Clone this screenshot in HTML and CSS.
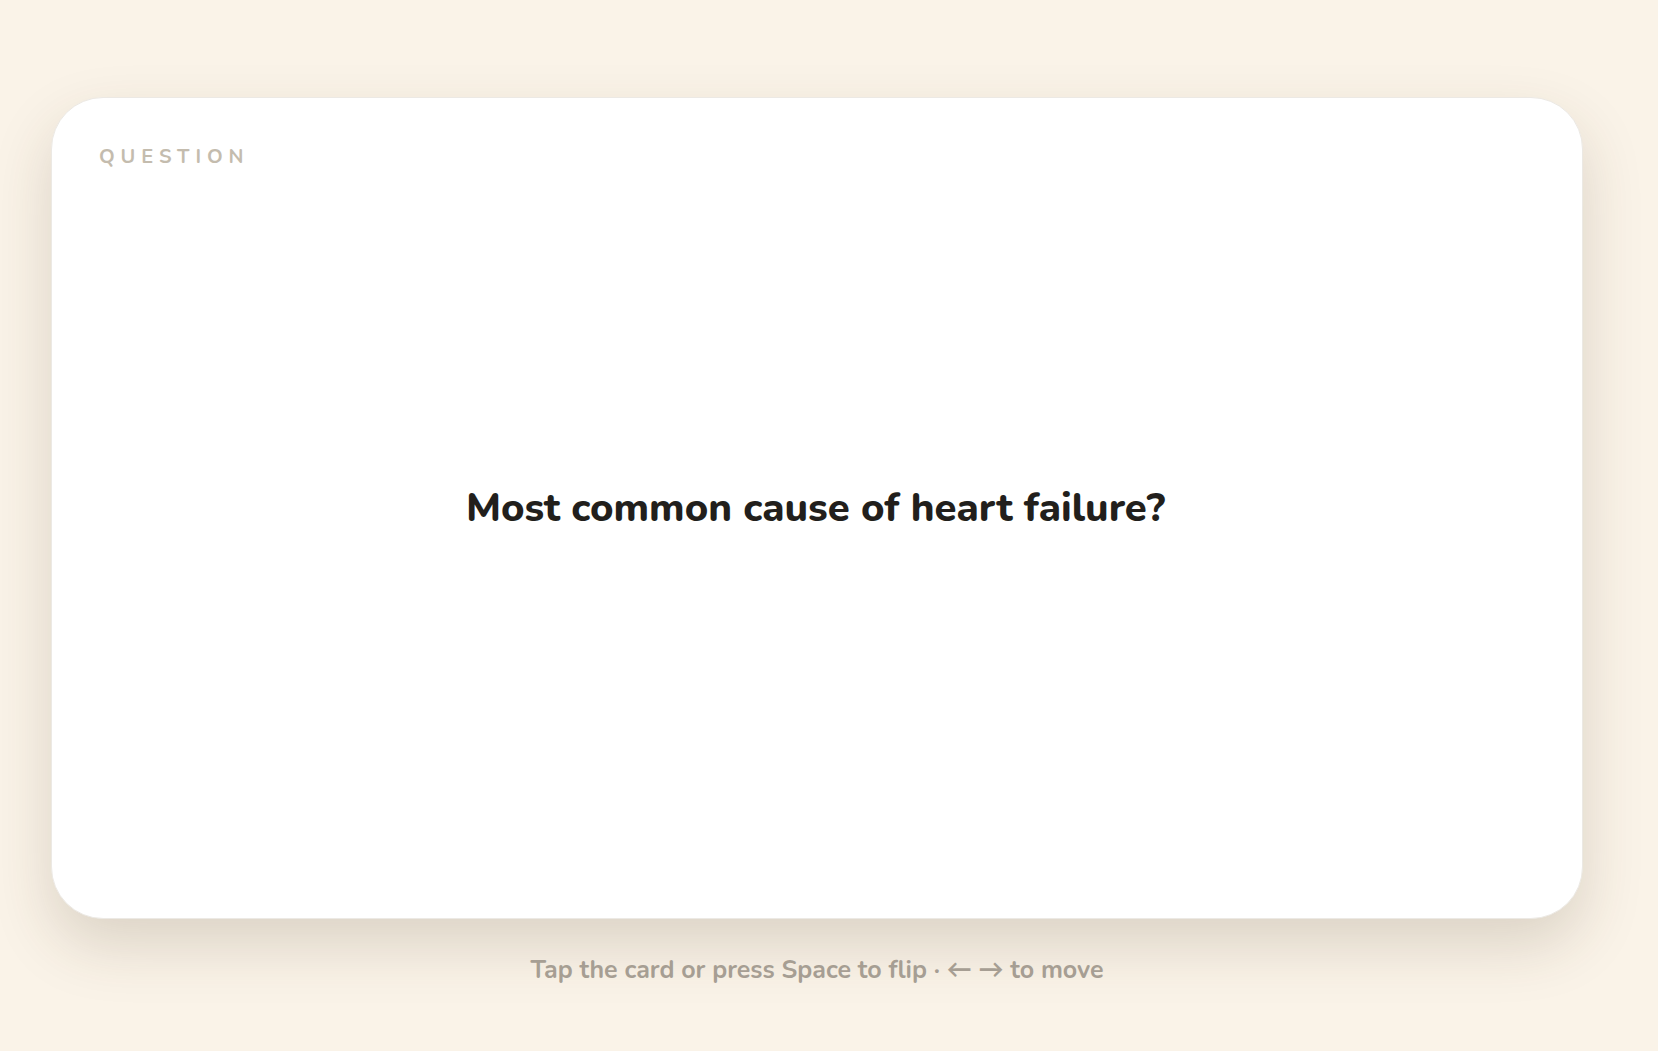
FILE: index.html
```html
<!DOCTYPE html>
<html lang="en">
<head>
<meta charset="utf-8">
<title>Flashcard</title>
<link rel="stylesheet" href="styles.css">
</head>
<body>
<main class="stage">
  <section class="card">
    <div class="card-label">QUESTION</div>
    <div class="card-body">
      <h1 class="card-text">Most common cause of heart failure?</h1>
    </div>
  </section>
  <p class="hint">Tap the card or press Space to flip · ← → to move</p>
</main>
</body>
</html>
```

FILE: styles.css
```css
html, body {
  margin: 0;
  padding: 0;
}
body {
  background: #faf3e8;
  font-family: "Nunito", "Lato", "Open Sans", sans-serif;
  min-height: 1051px;
}
.stage {
  display: flex;
  flex-direction: column;
  align-items: stretch;
  padding: 97px 75px 0 51px;
}
.card {
  box-sizing: border-box;
  height: 822px;
  background: #ffffff;
  border: 1px solid #ece9e4;
  border-radius: 52px;
  box-shadow: 0 26px 60px rgba(70, 55, 30, 0.17);
  display: flex;
  flex-direction: column;
  padding: 47px 50px 40px 47px;
}
.card-label {
  font-size: 20px;
  font-weight: 700;
  letter-spacing: 5.9px;
  color: #c4bcae;
  line-height: 24px;
}
.card-body {
  flex: 1;
  display: flex;
  align-items: center;
  justify-content: center;
  margin-top: -31px;
}
.card-text {
  margin: 0;
  font-size: 40px;
  font-weight: 800;
  color: #221f1c;
  text-align: center;
}
.hint {
  margin: 34px 0 0;
  text-align: center;
  font-size: 25px;
  font-weight: 700;
  color: #a69e93;
}
```
